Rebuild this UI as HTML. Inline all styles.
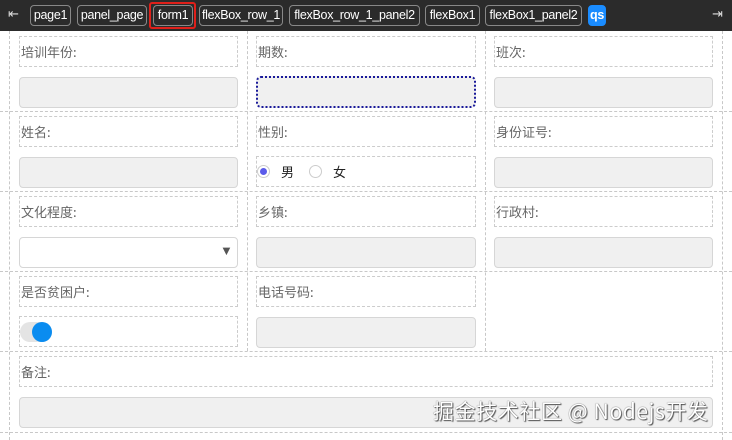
<!DOCTYPE html>
<html><head><meta charset="utf-8"><style>
*{box-sizing:border-box;margin:0;padding:0}
body{width:732px;height:440px;overflow:hidden;background:#fff;font-family:"Liberation Sans","Noto Sans CJK SC",sans-serif;position:relative}
.bar{position:absolute;left:0;top:0;width:732px;height:31px;background:#2b2b2b}
.t{position:absolute;top:5px;height:21px;border:1px solid #888;border-radius:4px;color:#fff;font-size:12.5px;line-height:19px;padding:0;text-align:center;white-space:nowrap;letter-spacing:-0.3px;overflow:hidden}
.hl{position:absolute;left:0;width:732px;border-top:1px dashed #c8c8c8}
.vl{position:absolute;top:31px;height:409px;border-left:1px dashed #c8c8c8}
.lb{position:absolute;height:31px;border:1px dashed #ccc;font-size:13px;color:#666;line-height:29px;padding-left:1px;font-family:"Noto Sans CJK SC",sans-serif}
.in{position:absolute;height:31px;border:1px solid #d6d6d6;border-radius:4px;background:#f0f0f0}
.bx{position:absolute;height:31px;border:1px dashed #ccc}
</style></head><body>
<div class="bar"></div>
<div style="position:absolute;left:8px;top:6px;color:#ddd;font-size:13px">⇤</div>
<div class="t" style="left:30px;width:41px">page1</div>
<div class="t" style="left:77px;width:70px">panel_page</div>
<div style="position:absolute;left:149px;top:2px;width:47px;height:27px;border:2px solid #e0201a;border-radius:3px"></div>
<div class="t" style="left:153px;width:40px">form1</div>
<div class="t" style="left:199px;width:84px">flexBox_row_1</div>
<div class="t" style="left:289px;width:131px">flexBox_row_1_panel2</div>
<div class="t" style="left:425px;width:55px">flexBox1</div>
<div class="t" style="left:485px;width:97px">flexBox1_panel2</div>
<div class="t" style="left:588px;width:18px;background:#1a8cff;border-color:#1a8cff;font-weight:bold">qs</div>
<div style="position:absolute;left:712px;top:6px;color:#ddd;font-size:13px">⇥</div>

<div class="vl" style="left:9px"></div>
<div class="vl" style="left:247px;height:320px"></div>
<div class="vl" style="left:485px;height:320px"></div>
<div class="vl" style="left:722px"></div>
<div class="hl" style="top:111px"></div>
<div class="hl" style="top:191px"></div>
<div class="hl" style="top:271px"></div>
<div class="hl" style="top:351px"></div>
<div class="hl" style="top:432px"></div>

<div class="lb" style="left:19px;top:36px;width:219px">培训年份:</div>
<div class="in" style="left:19px;top:77px;width:219px"></div>
<div class="lb" style="left:256px;top:36px;width:220px">期数:</div>
<div class="in" style="left:256px;top:76px;width:220px;height:32px;border:2px dotted #1a1a9a;border-radius:5px"></div>
<div class="lb" style="left:494px;top:36px;width:219px">班次:</div>
<div class="in" style="left:494px;top:77px;width:219px"></div>

<div class="lb" style="left:19px;top:116px;width:219px">姓名:</div>
<div class="in" style="left:19px;top:157px;width:219px"></div>
<div class="lb" style="left:256px;top:116px;width:220px">性别:</div>
<div class="bx" style="left:256px;top:156px;width:220px"></div>
<div style="position:absolute;left:257px;top:165px;width:13px;height:13px;border-radius:50%;border:1px solid #ccc;background:#fff"><div style="position:absolute;left:2px;top:2px;width:7px;height:7px;border-radius:50%;background:#5b5bea"></div></div>
<div style="position:absolute;left:281px;top:162px;font-size:13px;color:#222;font-family:'Noto Sans CJK SC',sans-serif">男</div>
<div style="position:absolute;left:309px;top:165px;width:13px;height:13px;border-radius:50%;border:1px solid #ccc"></div>
<div style="position:absolute;left:333px;top:162px;font-size:13px;color:#222;font-family:'Noto Sans CJK SC',sans-serif">女</div>
<div class="lb" style="left:494px;top:116px;width:219px">身份证号:</div>
<div class="in" style="left:494px;top:157px;width:219px"></div>

<div class="lb" style="left:19px;top:196px;width:219px">文化程度:</div>
<div class="in" style="left:19px;top:237px;width:219px;background:#fff"></div>
<div style="position:absolute;left:220px;top:243px;font-size:13px;color:#555">▼</div>
<div class="lb" style="left:256px;top:196px;width:220px">乡镇:</div>
<div class="in" style="left:256px;top:237px;width:220px"></div>
<div class="lb" style="left:494px;top:196px;width:219px">行政村:</div>
<div class="in" style="left:494px;top:237px;width:219px"></div>

<div class="lb" style="left:19px;top:276px;width:219px">是否贫困户:</div>
<div class="bx" style="left:19px;top:316px;width:219px"></div>
<div style="position:absolute;left:20px;top:322px;width:32px;height:20px;border-radius:10px;background:#e4e4e4"></div>
<div style="position:absolute;left:32px;top:322px;width:20px;height:20px;border-radius:50%;background:#0a8cf0"></div>
<div class="lb" style="left:256px;top:276px;width:220px">电话号码:</div>
<div class="in" style="left:256px;top:317px;width:220px"></div>

<div class="lb" style="left:19px;top:356px;width:694px">备注:</div>
<div class="in" style="left:19px;top:397px;width:694px"></div>
<div style="position:absolute;left:433px;top:396px;font-size:21px;letter-spacing:0.6px;color:#fff;text-shadow:0 0 1px #333,1px 1px 1px #555;font-family:'Noto Sans CJK SC',sans-serif;white-space:nowrap">掘金技术社区 @ Nodejs开发</div>
</body></html>
